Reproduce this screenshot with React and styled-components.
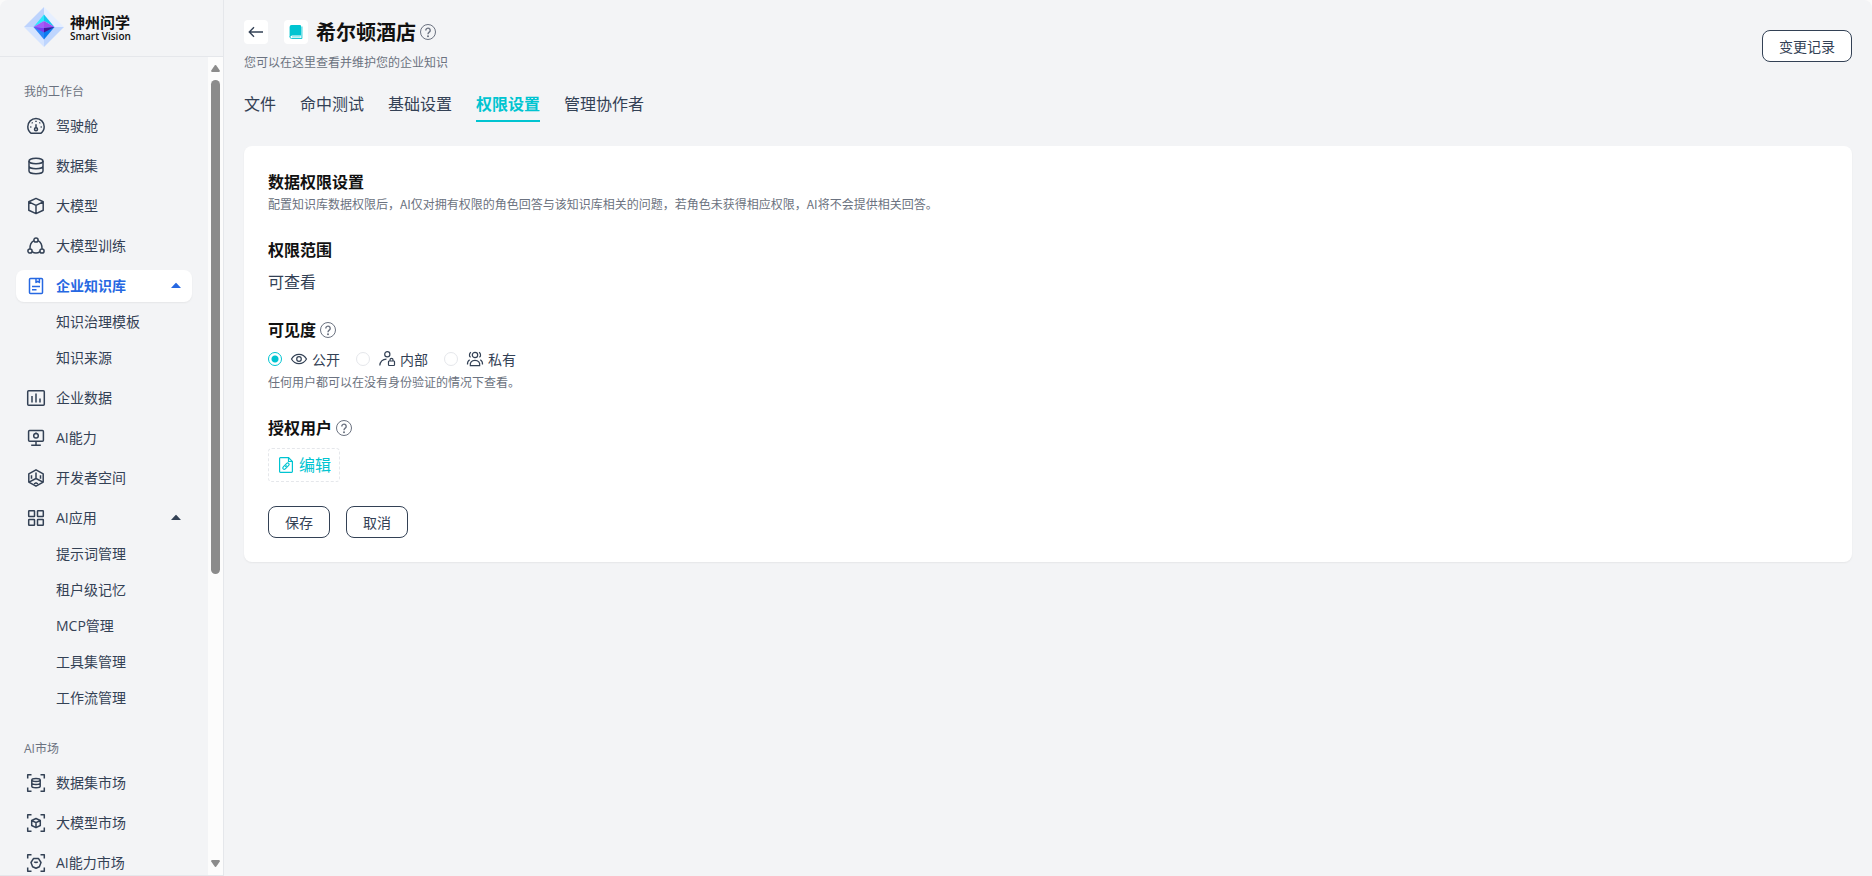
import React from "react";
import styled, { createGlobalStyle, css } from "styled-components";

const ink = "#334155";
const muted = "#6b7280";
const accent = "#00c4d1";
const blue = "#2668e2";
const cjkFirst = `"Noto Sans CJK SC", "Noto Sans", sans-serif`;

const GlobalStyle = createGlobalStyle`
    * {
        box-sizing: border-box;
    }

    body {
        margin: 0;
        background: #fafafa;
        color: ${ink};
        font-family: "Open Sans", "Noto Sans CJK SC", sans-serif;
        font-size: 14px;
    }

    button, input {
        font-family: inherit;
    }
`

const Shell = styled.div`
    display: flex;
    height: 100vh;
    overflow: hidden;
    background: #f3f4f6;
    border-radius: 8px 8px 0 0;
`

const Sidebar = styled.aside`
    display: flex;
    flex-direction: column;
    flex: 0 0 224px;
    border-right: 1px solid #e5e7eb;
    border-bottom: 1px solid #e5e7eb;
`

const Brand = styled.a`
    display: flex;
    align-items: center;
    gap: 6px;
    flex: 0 0 57px;
    padding: 0 24px 2px;
    border-bottom: 1px solid #e5e7eb;
    color: #111;
    text-decoration: none;
`

const BrandName = styled.span`
    display: flex;
    flex-direction: column;
    font-size: 15px;
    line-height: 18px;
    font-weight: 700;
`

const BrandLatin = styled.span`
    font-size: 10px;
    line-height: 10px;
    font-weight: 600;
`

const SideBody = styled.div`
    display: flex;
    flex: 1;
    min-height: 0;
`

const Nav = styled.nav`
    flex: 1;
    padding: 24px 16px 0;
    overflow: hidden;
`

const Section = styled.section`
    display: flex;
    flex-direction: column;
    gap: 8px;
    margin-bottom: 24px;
`

const SectionLabel = styled.h2`
    margin: 0;
    padding-left: 8px;
    font-size: 12px;
    line-height: 21px;
    font-weight: 400;
    color: ${muted};
`

const NavItem = styled.a`
    display: flex;
    align-items: center;
    gap: 10px;
    height: 32px;
    padding: 0 10px;
    border-radius: 8px;
    color: ${ink};
    text-decoration: none;

    ${(p) => p.$active && css`
        background: #fff;
        color: ${blue};
        font-weight: 700;
        box-shadow: 0 1px 2px rgba(0, 0, 0, 0.06);
    `}
`

const NavText = styled.span`
    flex: 1;
    line-height: 20px;
`

const SubList = styled.div`
    display: flex;
    flex-direction: column;
    gap: 4px;
    margin-top: -4px;
`

const SubItem = styled.a`
    padding-left: 40px;
    line-height: 32px;
    color: ${ink};
    text-decoration: none;
`

const Rail = styled.div`
    display: flex;
    flex-direction: column;
    align-items: center;
    gap: 8px;
    flex: 0 0 15px;
    padding: 8px 0;
    background: #fcfcfc;
    color: #8b8b8b;

    svg {
        display: block;
        flex: none;
    }
`

const Track = styled.div`
    flex: 1;
`

const Thumb = styled.div`
    width: 9px;
    height: 64%;
    border-radius: 5px;
    background: #8b8b8b;
`

const Main = styled.main`
    flex: 1;
    min-width: 0;
    padding: 20px;
`

const PageHead = styled.header`
    display: flex;
    align-items: center;
    justify-content: space-between;
`

const TitleRow = styled.div`
    display: flex;
    align-items: center;
    height: 24px;
    margin-bottom: 8px;
`

const BackButton = styled.button`
    display: flex;
    align-items: center;
    justify-content: center;
    width: 24px;
    height: 24px;
    margin-right: 16px;
    padding: 0;
    border: 0;
    border-radius: 4px;
    background: #fff;
    color: ${ink};
`

const BookTile = styled.span`
    display: flex;
    align-items: center;
    justify-content: center;
    width: 24px;
    height: 24px;
    margin-right: 8px;
    border-radius: 4px;
    background: #fff;
    color: ${accent};
`

const Title = styled.h1`
    margin: 0 4px 0 0;
    font-family: ${cjkFirst};
    font-size: 20px;
    line-height: 24px;
    font-weight: 700;
    color: #111;
`

const Note = styled.p`
    margin: 0;
    font-family: ${cjkFirst};
    font-size: 12px;
    line-height: 20px;
    color: ${muted};
`

const Tabs = styled.nav`
    display: flex;
    gap: 24px;
    margin: 20px 0 24px;
`

const Tab = styled.a`
    padding-bottom: 4px;
    border-bottom: 2px solid ${(p) => (p.$active ? accent : "transparent")};
    font-size: 16px;
    line-height: 24px;
    font-weight: ${(p) => (p.$active ? 700 : 400)};
    color: ${(p) => (p.$active ? accent : ink)};
    text-decoration: none;
`

const Card = styled.form`
    padding: 24px;
    border-radius: 8px;
    background: #fff;
    box-shadow: 0 1px 2px rgba(0, 0, 0, 0.06);
`

const Block = styled.section`
    margin-bottom: 24px;
`

const Heading = styled.h3`
    display: flex;
    align-items: center;
    gap: 4px;
    margin: 0;
    font-size: 16px;
    line-height: 24px;
    font-weight: 700;
    color: #111;
`

const Scope = styled.p`
    margin: 8px 0 0;
    font-size: 16px;
    line-height: 24px;
`

const Options = styled.div`
    display: flex;
    gap: 16px;
    margin: 6px 0 2px;
`

const Option = styled.label`
    display: flex;
    align-items: center;
    font-family: ${cjkFirst};
    line-height: 22px;

    svg {
        margin: 0 4px 0 8px;
    }
`

const Radio = styled.input`
    appearance: none;
    width: 14px;
    height: 14px;
    margin: 0;
    border: 1px solid #e5e7eb;
    border-radius: 50%;
    background: #fff;

    &:checked {
        border-color: ${accent};
        background: radial-gradient(circle, ${accent} 3px, #fff 4px);
    }
`

const EditButton = styled.button`
    display: flex;
    align-items: center;
    gap: 4px;
    height: 34px;
    margin-top: 8px;
    padding: 0 8px;
    border: 1px dashed #e5e7eb;
    border-radius: 4px;
    background: #fff;
    font-size: 16px;
    line-height: 24px;
    color: ${accent};
`

const Actions = styled.div`
    display: flex;
    gap: 16px;
`

const Button = styled.button`
    height: 32px;
    padding: 0 16px;
    border: 1px solid ${ink};
    border-radius: 8px;
    background: #fff;
    font-family: ${cjkFirst};
    font-size: 14px;
    color: ${ink};
`

const frame = <path d="M1.700 5.500V1.700h3.800M14.500 1.700h3.800v3.800M18.300 14.500v3.800h-3.800M5.500 18.300H1.700v-3.800" />

const icons = {
    cockpit: (
        <>
            <path d="M5.200 17.300h9.600c2-1.500 3.400-4 3.400-6.600a8.200 8.200 0 0 0-16.400 0c0 2.600 1.400 5.100 3.400 6.600z" />
            <circle cx="10" cy="13.300" r="1.500" />
            <path d="M10 11.800V8.200M10 4.800v1.200M5.800 6.500l.8.800M14.200 6.500l-.8.800M4.200 11h1.200M14.600 11h1.200" />
        </>
    ),
    dataset: (
        <>
            <ellipse cx="10" cy="5" rx="7" ry="2.800" />
            <path d="M3 5v10c0 1.500 3.100 2.800 7 2.800s7-1.300 7-2.800V5M3 10c0 1.500 3.100 2.800 7 2.800s7-1.300 7-2.800" />
        </>
    ),
    model: <path d="M10 2.400l7.200 3.400v8.400L10 17.600l-7.200-3.400V5.800zM2.800 5.800L10 9.400l7.200-3.600M10 9.400v8.200" />,
    training: (
        <>
            <circle cx="10" cy="4" r="2.100" />
            <circle cx="4" cy="15" r="2.100" />
            <circle cx="16" cy="15" r="2.100" />
            <path d="M7.900 4.700C5.200 6.200 3.800 9.200 4 12.900M12.100 4.700c2.700 1.500 4.100 4.500 3.900 8.200M6 15.600c2.500 1.700 5.500 1.700 8 0" />
        </>
    ),
    knowledge: (
        <>
            <rect x="3.500" y="2.500" width="13" height="15" rx="1" />
            <path d="M10 2.500v4l1.700-1.200 1.700 1.200v-4M6 10.400h8M6 13.800h4.500" />
        </>
    ),
    bizdata: (
        <>
            <rect x="1.700" y="2.700" width="16.600" height="14.600" rx="1" />
            <path d="M6 8v6.500M10 5.500v9M14 10.500v4" />
        </>
    ),
    ability: (
        <>
            <rect x="2.600" y="2.600" width="14.800" height="10.600" rx="1" />
            <circle cx="10" cy="7.800" r="2.300" />
            <path d="M10 4.500v1M10 13.200v4M5.200 17.300h9.600" />
        </>
    ),
    space: (
        <>
            <path d="M10 1.800l7.200 4.100v8.200L10 18.200l-7.200-4.100V5.900z" />
            <path d="M10 4.500v6M10 10.500l-7 3.600M10 10.500l7 3.600M5.500 7.200v3.500M14.500 7.200v3.500M8 15.800l2-1 2 1" />
        </>
    ),
    apps: (
        <>
            <rect x="2.700" y="2.700" width="5.800" height="5.800" rx=".5" />
            <rect x="11.500" y="2.700" width="5.800" height="5.800" rx=".5" />
            <rect x="2.700" y="11.500" width="5.800" height="5.800" rx=".5" />
            <rect x="11.500" y="11.500" width="5.800" height="5.800" rx=".5" />
        </>
    ),
    datasetMarket: (
        <>
            {frame}
            <ellipse cx="10" cy="6.900" rx="4.200" ry="1.500" />
            <path d="M5.800 6.900v6.400c0 .9 1.800 1.500 4.200 1.500s4.200-.6 4.200-1.500V6.900M5.800 10c0 .9 1.800 1.500 4.200 1.500s4.200-.6 4.200-1.500" />
        </>
    ),
    modelMarket: (
        <>
            {frame}
            <path d="M10 5.500l4.300 2v5L10 14.700l-4.300-2.200v-5zM5.700 7.500L10 9.700l4.300-2.200M10 9.700v5" />
        </>
    ),
    abilityMarket: (
        <>
            {frame}
            <path d="M7.600 5.400h4.800l2.600 4.100-1.600 4.200L10 15.300l-3.400-1.600L5 9.500z" />
            <path d="M8.300 8.700c.8.900 2.600.9 3.400 0" />
        </>
    ),
}

function NavIcon ({ name }) {return (
    <svg width="20" height="20" viewBox="0 0 20 20" fill="none" stroke="currentColor" strokeWidth="1.5" strokeLinejoin="round" aria-hidden="true">
        {icons[name]}
    </svg>
)}

function Caret () {return (
    <svg width="12" height="12" viewBox="0 0 12 12" fill="currentColor" aria-hidden="true">
        <path d="M1 8L5.400 3.200a.8.800 0 0 1 1.200 0L11 8z" />
    </svg>
)}

function HelpIcon () {return (
    <svg width="16" height="16" viewBox="0 0 16 16" fill="none" stroke={muted} aria-hidden="true">
        <circle cx="8" cy="8" r="7.500" />
        <path d="M5.800 6.400a2.200 2.200 0 1 1 3.400 1.800C8.300 8.800 8 9.200 8 10.200" strokeWidth="1.400" />
        <circle cx="8" cy="12.200" r="1" fill={muted} stroke="none" />
    </svg>
)}

function Logo () {return (
    <svg width="40" height="40" viewBox="0 0 40 40" aria-hidden="true">
        <path d="M20 0L0 20h20z" fill="#bdd3fd" />
        <path d="M20 0l20 20H20z" fill="#e6efff" />
        <path d="M0 20l20 20V20z" fill="#d5e4ff" />
        <path d="M40 20L20 40V20z" fill="#bed5fe" />
        <path d="M20 7.500L9.500 20 20 14z" fill="#2ce8fb" />
        <path d="M20 7.500L30.500 20 20 14z" fill="#16c4f0" />
        <path d="M9.500 20L20 14v7z" fill="#a35cf8" />
        <path d="M30.500 20L20 14v7z" fill="#a04cf0" />
        <path d="M9.500 20L20 21v11.500z" fill="#2f86f8" />
        <path d="M30.500 20L20 21v11.500z" fill="#0a7df0" />
        <path d="M30.500 20L20 21v4.500z" fill="#43169c" />
        <path d="M9.500 20L20 21v4.500z" fill="#7a3cf0" />
    </svg>
)}

const optionIcons = {
    open: (
        <>
            <path d="M1.500 9C3.200 6 5.900 4.300 9 4.300S14.800 6 16.500 9c-1.700 3-4.400 4.700-7.500 4.700S3.200 12 1.500 9z" />
            <circle cx="9" cy="9" r="2.300" />
        </>
    ),
    inner: (
        <>
            <circle cx="9.300" cy="4.200" r="2.600" />
            <path d="M1.800 15.500c.3-3.700 2.700-6.200 6.700-6.400" />
            <rect x="10.500" y="11" width="6" height="4.500" rx=".8" />
            <path d="M12 11V9.800a1.500 1.500 0 0 1 3 0V11" />
        </>
    ),
    closed: (
        <>
            <circle cx="9" cy="5" r="2.700" />
            <path d="M4.300 15.600c-.4-3 1.200-5.200 4.700-5.200s5.100 2.200 4.700 5.200zM4.600 7.300C3 6.300 3 3.600 4.900 2.300M13.400 7.300c1.600-1 1.600-3.700-.3-5M1.500 14.500c-.2-2 .5-3.800 2.200-4.800M16.500 14.500c.2-2-.5-3.800-2.200-4.800" />
        </>
    ),
}

const sections = [
    {
        label: "我的工作台",
        items: [
            { icon: "cockpit", text: "驾驶舱" },
            { icon: "dataset", text: "数据集" },
            { icon: "model", text: "大模型" },
            { icon: "training", text: "大模型训练" },
            { icon: "knowledge", text: "企业知识库", active: true, sub: ["知识治理模板", "知识来源"] },
            { icon: "bizdata", text: "企业数据" },
            { icon: "ability", text: "AI能力" },
            { icon: "space", text: "开发者空间" },
            { icon: "apps", text: "AI应用", sub: ["提示词管理", "租户级记忆", "MCP管理", "工具集管理", "工作流管理"] },
        ],
    },
    {
        label: "AI市场",
        items: [
            { icon: "datasetMarket", text: "数据集市场" },
            { icon: "modelMarket", text: "大模型市场" },
            { icon: "abilityMarket", text: "AI能力市场" },
        ],
    },
]

const tabs = ["文件", "命中测试", "基础设置", "权限设置", "管理协作者"]

const options = [
    { value: "open", text: "公开" },
    { value: "inner", text: "内部" },
    { value: "closed", text: "私有" },
]

function SideNav () {return (
    <Sidebar>
        <Brand href="#">
            <Logo />
            <BrandName>
                神州问学
                <BrandLatin>Smart Vision</BrandLatin>
            </BrandName>
        </Brand>
        <SideBody>
            <Nav>
                {sections.map((section) => (
                    <Section key={section.label}>
                        <SectionLabel>{section.label}</SectionLabel>
                        {section.items.map((item) => (
                            <React.Fragment key={item.text}>
                                <NavItem href="#" $active={item.active}>
                                    <NavIcon name={item.icon} />
                                    <NavText>{item.text}</NavText>
                                    {item.sub && <Caret />}
                                </NavItem>
                                {item.sub && (
                                    <SubList>
                                        {item.sub.map((s) => <SubItem key={s} href="#">{s}</SubItem>)}
                                    </SubList>
                                )}
                            </React.Fragment>
                        ))}
                    </Section>
                ))}
            </Nav>
            <Rail aria-hidden="true">
                <svg width="9" height="7" viewBox="0 0 9 7" fill="currentColor">
                    <path d="M3.700.5a1 1 0 0 1 1.600 0L8.800 5.500Q9 7 8 7H1Q0 7 .2 5.500z" />
                </svg>
                <Track><Thumb /></Track>
                <svg width="9" height="7" viewBox="0 0 9 7" fill="currentColor">
                    <path d="M3.700 6.500a1 1 0 0 0 1.600 0L8.800 1.500Q9 0 8 0H1Q0 0 .2 1.500z" />
                </svg>
            </Rail>
        </SideBody>
    </Sidebar>
)}

function PermissionForm () {
    const [visibility, setVisibility] = React.useState("open");

    return (
        <Card onSubmit={(e) => e.preventDefault()}>
            <Block>
                <Heading>数据权限设置</Heading>
                <Note>配置知识库数据权限后，AI仅对拥有权限的角色回答与该知识库相关的问题，若角色未获得相应权限，AI将不会提供相关回答。</Note>
            </Block>
            <Block>
                <Heading>权限范围</Heading>
                <Scope>可查看</Scope>
            </Block>
            <Block>
                <Heading>可见度<HelpIcon /></Heading>
                <Options>
                    {options.map((o) => (
                        <Option key={o.value}>
                            <Radio
                                type="radio"
                                name="visibility"
                                checked={visibility === o.value}
                                onChange={() => setVisibility(o.value)}
                            />
                            <svg width="18" height="18" viewBox="0 0 18 18" fill="none" stroke="currentColor" strokeWidth="1.2" aria-hidden="true">
                                {optionIcons[o.value]}
                            </svg>
                            {o.text}
                        </Option>
                    ))}
                </Options>
                <Note>任何用户都可以在没有身份验证的情况下查看。</Note>
            </Block>
            <Block>
                <Heading>授权用户<HelpIcon /></Heading>
                <EditButton type="button">
                    <svg width="18" height="18" viewBox="0 0 18 18" fill="none" stroke="currentColor" strokeWidth="1.2" aria-hidden="true">
                        <path d="M11.500 1.600H3.400a.8.800 0 0 0-.8.800v13.200c0 .4.400.8.800.8h11.200c.4 0 .8-.4.800-.8V5.500z" />
                        <path d="M11.500 1.600v3.900h3.900" />
                        <path d="M6.200 12.900c-.7-.7-.5-1.500.1-2.100l3.400-3.400a1.400 1.400 0 0 1 2 2l-3.400 3.400c-.6.600-1.400.8-2.100.1zM8.300 10.900l1.400-1.400" />
                    </svg>
                    编辑
                </EditButton>
            </Block>
            <Actions>
                <Button type="submit">保存</Button>
                <Button type="button">取消</Button>
            </Actions>
        </Card>
    )
}

export default function App () {return (
    <>
        <GlobalStyle />
        <Shell>
            <SideNav />
            <Main>
                <PageHead>
                    <div>
                        <TitleRow>
                            <BackButton type="button" aria-label="返回">
                                <svg width="16" height="16" viewBox="0 0 16 16" fill="none" stroke="currentColor" strokeWidth="1.4" aria-hidden="true">
                                    <path d="M15 8H1.500M6 3.300L1.300 8 6 12.700" />
                                </svg>
                            </BackButton>
                            <BookTile>
                                <svg width="14" height="16" viewBox="0 0 14 16" fill="currentColor" aria-hidden="true">
                                    <path d="M2.500 1H11a1 1 0 0 1 1 1v9.500H2.500L.6 13V3A2 2 0 0 1 2.500 1z" />
                                    <path d="M12.900 2.500v12H2.600a1.600 1.600 0 0 1-1.600-1.700c0-.9.700-1.600 1.600-1.600" fill="none" stroke="currentColor" strokeWidth=".9" />
                                    <path d="M3 12.900h8.500" fill="none" stroke="currentColor" strokeWidth=".6" />
                                </svg>
                            </BookTile>
                            <Title>希尔顿酒店</Title>
                            <HelpIcon />
                        </TitleRow>
                        <Note>您可以在这里查看并维护您的企业知识</Note>
                    </div>
                    <Button type="button">变更记录</Button>
                </PageHead>
                <Tabs>
                    {tabs.map((t) => <Tab key={t} href="#" $active={t === "权限设置"}>{t}</Tab>)}
                </Tabs>
                <PermissionForm />
            </Main>
        </Shell>
    </>
)};
